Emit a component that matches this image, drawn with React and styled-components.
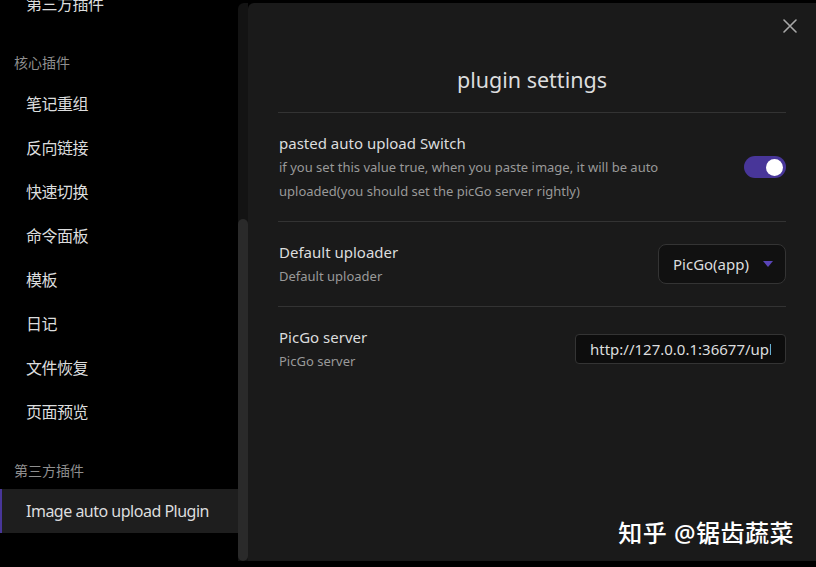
import React from "react";
import styled, { createGlobalStyle } from "styled-components";

const GlobalStyle = createGlobalStyle`
  html, body {
    margin: 0;
    padding: 0;
    background: #000;
  }
  body {
    font-family: "Noto Sans", "Noto Sans CJK SC", sans-serif;
    color: #dcddde;
  }
`;

const Page = styled.div`
  position: relative;
  display: flex;
  height: 567px;
  overflow: hidden;
  background: #000;
`;

const Sidebar = styled.nav`
  width: 238px;
  flex-shrink: 0;
  margin-top: -19px;
`;

const GroupTitle = styled.div`
  margin: 28px 0 8px;
  padding-left: 14px;
  font-size: 14px;
  line-height: 20px;
  color: #8f8f8f;
`;

const NavItem = styled.div`
  height: 44px;
  display: flex;
  align-items: center;
  padding-left: 26px;
  font-size: 16px;
  letter-spacing: -0.5px;
  color: #dcddde;
  background: ${(p) => (p.$active ? "#1e1e1e" : "transparent")};
  box-shadow: ${(p) => (p.$active ? "inset 2px 0 0 #483699" : "none")};
`;

const ScrollTrack = styled.div`
  width: 10px;
  flex-shrink: 0;
  margin: 3px 0 6px;
  display: flex;
  flex-direction: column;
  background: #131313;
  border-radius: 6px 0 0 0;
`;

const ScrollThumb = styled.div`
  margin-top: 216px;
  flex: 1;
  background: #2a2a2a;
  border-radius: 5px;
`;

const Modal = styled.section`
  position: relative;
  flex: 1;
  margin: 3px 0 6px;
  padding: 61px 30px 0;
  background: #1a1a1a;
  border-radius: 6px 0 0 0;
`;

const CloseButton = styled.button`
  position: absolute;
  top: 15px;
  right: 18px;
  width: 16px;
  height: 16px;
  padding: 0;
  border: 0;
  background: none;
  color: #a8a8a8;
  display: flex;
  align-items: center;
  justify-content: center;
`;

const Header = styled.h2`
  margin: 0;
  padding-bottom: 16px;
  border-bottom: 1px solid #333;
  text-align: center;
  font-size: 21.5px;
  line-height: 32px;
  font-weight: 400;
  color: #dcddde;
`;

const SettingRow = styled.div`
  display: flex;
  align-items: center;
  padding: 18px 0;
  border-bottom: ${(p) => (p.$last ? "none" : "1px solid #333")};
`;

const Info = styled.div`
  flex: 1 1 auto;
  margin-right: 16px;
  padding-left: 1px;
`;

const Name = styled.div`
  font-size: 15px;
  line-height: 24px;
  color: #dcddde;
`;

const Desc = styled.div`
  font-size: 13px;
  line-height: 24px;
  color: #999;
`;

const Toggle = styled.div`
  width: 42px;
  height: 22px;
  flex-shrink: 0;
  border-radius: 11px;
  background: #483699;
  display: flex;
  align-items: center;
  justify-content: flex-end;
  padding: 0 3px;
  box-sizing: border-box;
`;

const Knob = styled.div`
  width: 17px;
  height: 17px;
  border-radius: 50%;
  background: #fff;
`;

const Select = styled.div`
  height: 40px;
  box-sizing: border-box;
  display: flex;
  align-items: center;
  gap: 14px;
  padding: 0 12px 0 14px;
  background: #111;
  border: 1px solid #343434;
  border-radius: 8px;
  font-size: 15px;
  color: #dcddde;
`;

const Caret = styled.span`
  width: 0;
  height: 0;
  border-left: 5px solid transparent;
  border-right: 5px solid transparent;
  border-top: 6px solid #5a45b8;
`;

const TextInput = styled.input`
  width: 211px;
  height: 30px;
  box-sizing: border-box;
  padding: 0 14px;
  background: #0d0d0d;
  border: 1px solid #343434;
  border-radius: 4px;
  font-family: inherit;
  font-size: 15px;
  color: #dcddde;
  outline: none;
`;

const Watermark = styled.div`
  position: absolute;
  right: 22px;
  bottom: 18px;
  font-size: 24px;
  font-weight: 500;
  color: #fff;
  letter-spacing: 0.5px;
`;

const coreItems = [
  "笔记重组",
  "反向链接",
  "快速切换",
  "命令面板",
  "模板",
  "日记",
  "文件恢复",
  "页面预览",
];

export default function App() {
  return (
    <>
      <GlobalStyle />
      <Page>
        <Sidebar>
          <NavItem>第三方插件</NavItem>
          <GroupTitle>核心插件</GroupTitle>
          {coreItems.map((item) => (
            <NavItem key={item}>{item}</NavItem>
          ))}
          <GroupTitle>第三方插件</GroupTitle>
          <NavItem $active>Image auto upload Plugin</NavItem>
        </Sidebar>
        <ScrollTrack>
          <ScrollThumb />
        </ScrollTrack>
        <Modal>
          <CloseButton aria-label="close">
            <svg width="14" height="14" viewBox="0 0 14 14">
              <path
                d="M1 1 L13 13 M13 1 L1 13"
                stroke="currentColor"
                strokeWidth="1.6"
                strokeLinecap="round"
              />
            </svg>
          </CloseButton>
          <Header>plugin settings</Header>
          <SettingRow>
            <Info>
              <Name>pasted auto upload Switch</Name>
              <Desc>
                if you set this value true, when you paste image, it will be
                auto uploaded(you should set the picGo server rightly)
              </Desc>
            </Info>
            <Toggle>
              <Knob />
            </Toggle>
          </SettingRow>
          <SettingRow>
            <Info>
              <Name>Default uploader</Name>
              <Desc>Default uploader</Desc>
            </Info>
            <Select>
              PicGo(app)
              <Caret />
            </Select>
          </SettingRow>
          <SettingRow $last>
            <Info>
              <Name>PicGo server</Name>
              <Desc>PicGo server</Desc>
            </Info>
            <TextInput readOnly value="http://127.0.0.1:36677/upload" />
          </SettingRow>
        </Modal>
        <Watermark>知乎 @锯齿蔬菜</Watermark>
      </Page>
    </>
  );
}
